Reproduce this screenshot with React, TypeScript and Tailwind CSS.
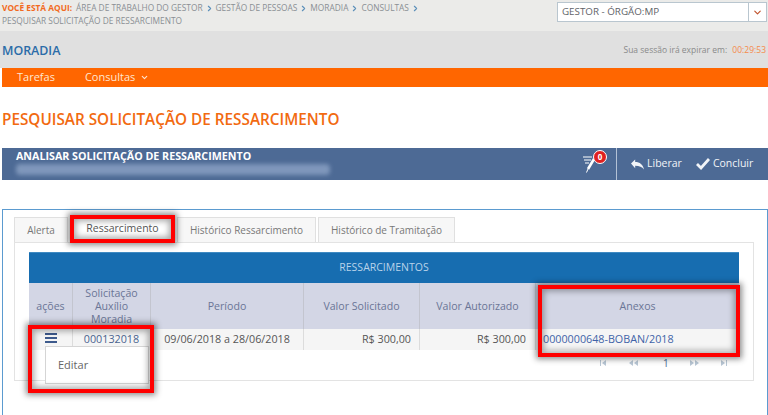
import { ChevronDown, ChevronRight } from "lucide-react";

const crumbs = ["ÁREA DE TRABALHO DO GESTOR", "GESTÃO DE PESSOAS", "MORADIA", "CONSULTAS"];

function Highlight({ className }: { className: string }) {
  return <div className={`absolute border-[4px] border-[#ff0000] shadow-[0_0_6px_2px_rgba(0,0,0,0.45),inset_0_0_6px_2px_rgba(0,0,0,0.35)] ${className}`} />;
}

function Pager() {
  return (
    <div className="flex h-[19px] items-end pb-[1px] pl-[571px] text-[#b9c8d6]">
      <svg viewBox="0 0 7 6" className="mb-[2px] h-[6px] w-[7px]" fill="currentColor">
        <path d="M0 0h1v6H0zM6 0v6L2 3z" />
      </svg>
      <svg viewBox="0 0 10 6" className="mb-[2px] ml-[21px] h-[6px] w-[10px]" fill="currentColor">
        <path d="M5 0v6L1 3zM10 0v6L6 3z" />
      </svg>
      <span className="ml-[25px] w-[4px] text-[10px] leading-[10px] text-[#4d6a95]">1</span>
      <svg viewBox="0 0 10 6" className="mb-[2px] ml-[23px] h-[6px] w-[10px]" fill="currentColor">
        <path d="M0 0v6l4-3zM5 0v6l4-3z" />
      </svg>
      <svg viewBox="0 0 7 6" className="mb-[2px] ml-[20px] h-[6px] w-[7px]" fill="currentColor">
        <path d="M6 0h1v6H6zM1 0v6l4-3z" />
      </svg>
    </div>
  );
}

export default function App() {
  return (
    <div className="relative h-[415px] w-[768px] overflow-hidden bg-white font-['Open_Sans',sans-serif] text-[#6b7280]">
      {/* breadcrumb */}
      <header className="flex h-[31px] bg-[#ebebe9] pl-[2px] pt-[1px]">
        <div className="w-[520px] text-[8.35px] leading-[12px] text-[#8a8f94]">
          <div className="flex h-[14px] items-center">
            <span className="mr-[4px] font-bold text-[#f26a21]">VOCÊ ESTÁ AQUI:</span>
            {crumbs.map((c) => (
              <span key={c} className="flex items-center">
                <span className="whitespace-nowrap">{c}</span>
                <ChevronRight className="mx-[2px] h-[9px] w-[9px] text-[#5b8fb9]" strokeWidth={3} />
              </span>
            ))}
          </div>
          <div className="mt-[-1px] h-[14px] leading-[14px]">PESQUISAR SOLICITAÇÃO DE RESSARCIMENTO</div>
        </div>
        <div className="ml-[35px] mt-[1px] flex h-[20px] w-[210px] border border-[#b9c6cf] bg-white text-[9.8px] text-[#5f6368]">
          <span className="flex-1 pl-[4px] leading-[18px]">GESTOR - ÓRGÃO:MP</span>
          <span className="flex w-[18px] items-center justify-center border-l border-[#b9c6cf]">
            <ChevronDown className="h-[11px] w-[11px] text-[#c0522b]" strokeWidth={2.5} />
          </span>
        </div>
      </header>

      {/* module bar */}
      <div className="flex h-[37px] items-center justify-between bg-[#e0e0e0] pl-[2px] pr-[2px]">
        <span className="pt-[3px] text-[12.4px] font-semibold text-[#2b6ca8]">MORADIA</span>
        <span className="pt-[2px] text-[8.5px] text-[#8a8a8a]">
          Sua sessão irá expirar em: <span className="ml-[3px] text-[#f58a4b]">00:29:53</span>
        </span>
      </div>

      {/* nav */}
      <nav className="ml-[2px] flex h-[19px] items-center bg-[#ff6600] pl-[15px] text-[11px] text-[#ffe6d2]">
        <span>Tarefas</span>
        <span className="ml-[30px] flex items-center">
          Consultas
          <ChevronDown className="ml-[5px] h-[9px] w-[9px]" strokeWidth={3} />
        </span>
      </nav>

      <h1 className="ml-[2px] mt-[20px] h-[24px] text-[15.3px] font-semibold leading-[24px] text-[#f26a10]">
        PESQUISAR SOLICITAÇÃO DE RESSARCIMENTO
      </h1>

      {/* analysis panel */}
      <section className="ml-[2px] mt-[17px] flex h-[32px] bg-[#4d6a95] text-white">
        <div className="flex-1 pl-[14px] pt-[2px]">
          <div className="text-[10.7px] font-bold leading-[13px]">ANALISAR SOLICITAÇÃO DE RESSARCIMENTO</div>
          <div className="mt-[1px] h-[11px] w-[314px] rounded-sm bg-[#7f97bb] blur-[2px]" />
        </div>
        <div className="relative w-[34px]">
          <svg viewBox="0 0 16 18" className="absolute left-[1px] top-[7px] h-[18px] w-[16px]" fill="none" stroke="white">
            <path d="M0 2h9M1 5h7M2 8h4" strokeWidth="1.2" />
            <path d="M11 4 5 14" strokeWidth="2.6" />
            <path d="M5 14 3.5 17.5" strokeWidth="1" />
          </svg>
          <span className="absolute left-[11px] top-[2px] flex h-[14px] w-[14px] items-center justify-center rounded-full border border-white bg-[#e02020] text-[8px] font-bold">
            0
          </span>
        </div>
        <div className="flex w-[152px] items-center border-l border-[#b4c2d6] pl-[14px] text-[10.5px] text-[#f1f4f8]">
          <svg viewBox="0 0 14 11" className="mr-[3px] h-[11px] w-[13px]" fill="currentColor">
            <path d="M0 4.5 4.5 0v2.8C9.5 2.8 13 5.5 14 11 12 8 9 6.8 4.5 6.8v2.7z" />
          </svg>
          <span>Liberar</span>
          <svg viewBox="0 0 14 12" className="ml-[14px] mr-[3px] h-[12px] w-[14px]" fill="none" stroke="currentColor" strokeWidth="2.8">
            <path d="M1 6l4 4 8-9" />
          </svg>
          <span>Concluir</span>
        </div>
      </section>

      {/* content box */}
      <section className="ml-[2px] mt-[29px] h-[230px] border border-[#5b9bd0] bg-white pl-[11px] pt-[7px]">
        <div className="flex h-[25px] gap-[2px] text-[10px] text-[#777]">
          <div className="flex h-[25px] w-[54px] items-center justify-center border border-b-0 border-[#e0e0e0] bg-[#f7f7f7]">Alerta</div>
          <div className="flex h-[23px] w-[105px] items-center justify-center text-[10.5px] text-[#555]">Ressarcimento</div>
          <div className="flex h-[25px] w-[139px] items-center justify-center border border-b-0 border-[#e0e0e0] bg-[#f7f7f7]">Histórico Ressarcimento</div>
          <div className="flex h-[25px] w-[137px] items-center justify-center border border-b-0 border-[#e0e0e0] bg-[#f7f7f7]">Histórico de Tramitação</div>
        </div>
        <div className="h-[139px] w-[740px] border border-[#e3e3e3] bg-white pl-[14px] pt-[9px]">
          <div className="w-[710px]">
            <div className="flex h-[31px] items-center justify-center border-t border-[#3f8ac2] bg-[#176db0] text-[10.5px] text-[#b9d3ea]">
              RESSARCIMENTOS
            </div>
            <div className="grid h-[46px] grid-cols-[44px_78px_153px_116px_116px_203px] bg-[#d3d6e5] text-center text-[10.6px] leading-[13px] text-[#6a7596]">
              <div className="flex items-center justify-center border-r border-[#c3c5cf]">ações</div>
              <div className="flex items-center justify-center border-r border-[#c3c5cf]">Solicitação Auxílio Moradia</div>
              <div className="flex items-center justify-center border-r border-[#c3c5cf]">Período</div>
              <div className="flex items-center justify-center border-r border-[#c3c5cf]">Valor Solicitado</div>
              <div className="flex items-center justify-center border-r border-[#c3c5cf]">Valor Autorizado</div>
              <div className="flex items-center justify-center">Anexos</div>
            </div>
            <div className="grid h-[21px] grid-cols-[44px_78px_153px_116px_116px_203px] bg-[#f5f5f5] text-[10.75px] leading-[21px] text-[#555]">
              <div className="flex items-start justify-center border-r border-[#dcdcdc] pt-[4px]">
                <div className="flex w-[12px] flex-col gap-[2px]">
                  <span className="h-[2px] bg-[#3d5a8c]" />
                  <span className="h-[2px] bg-[#3d5a8c]" />
                  <span className="h-[2px] bg-[#3d5a8c]" />
                </div>
              </div>
              <div className="border-r border-[#dcdcdc] text-center text-[#4a6490]">000132018</div>
              <div className="border-r border-[#dcdcdc] text-center">09/06/2018 a 28/06/2018</div>
              <div className="border-r border-[#dcdcdc] pr-[8px] text-right">R$ 300,00</div>
              <div className="border-r border-[#dcdcdc] pr-[9px] text-right">R$ 300,00</div>
              <div className="pl-[7px] text-[#3f63a8]">0000000648-BOBAN/2018</div>
            </div>
            <Pager />
          </div>
        </div>
      </section>

      {/* dropdown */}
      <div className="absolute left-[45px] top-[346px] flex h-[38px] w-[104px] items-center border border-[#d5d5d5] bg-white pl-[12px] text-[11px] text-[#666]">
        Editar
      </div>

      {/* red markers */}
      <Highlight className="left-[70px] top-[215px] h-[28px] w-[105px]" />
      <Highlight className="left-[28px] top-[325px] h-[68px] w-[126px]" />
      <Highlight className="left-[538px] top-[285px] h-[72px] w-[202px]" />
    </div>
  );
}
